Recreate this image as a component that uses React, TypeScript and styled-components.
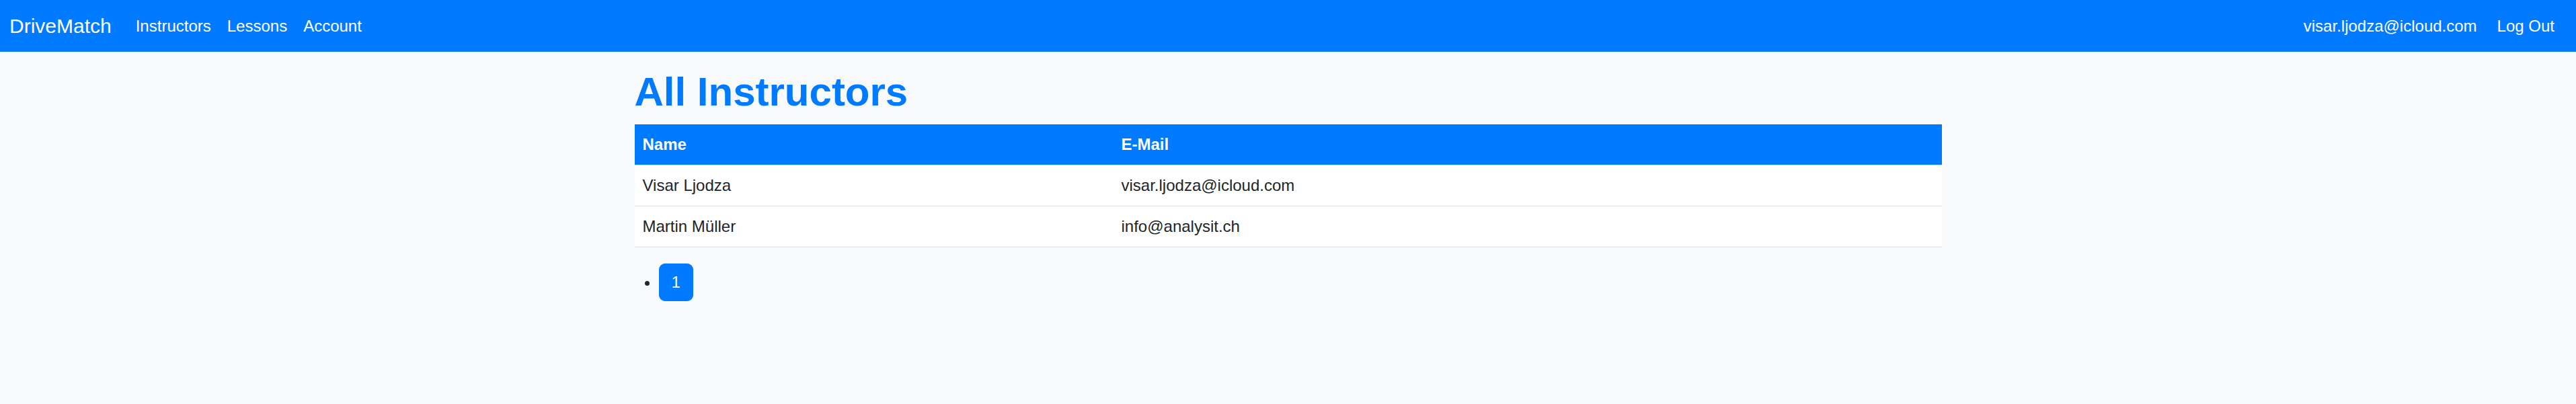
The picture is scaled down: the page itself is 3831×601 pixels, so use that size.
import React from "react";
import styled, { createGlobalStyle } from "styled-components";

const GlobalStyle = createGlobalStyle`
  html, body {
    margin: 0;
    padding: 0;
    background: #f8f9fa;
  }
  body {
    font-family: "Liberation Sans", Arial, sans-serif;
    font-size: 24px;
    line-height: 36px;
    color: #212529;
  }
  * { box-sizing: border-box; }
`;

const Page = styled.div`
  min-height: 601px;
  background: #f8f9fa;
`;

const Navbar = styled.nav`
  height: 77px;
  background: #007bff;
  display: flex;
  align-items: center;
  justify-content: space-between;
  padding: 0 20px 0 14px;
`;

const NavLeft = styled.div`
  display: flex;
  align-items: center;
`;

const Brand = styled.a`
  font-size: 30px;
  line-height: 45px;
  color: #fff;
  text-decoration: none;
  margin-right: 24px;
`;

const NavLink = styled.a<{ $gap?: number }>`
  color: #fff;
  text-decoration: none;
  font-size: 24px;
  line-height: 36px;
  padding: 0 12px;
  margin-left: ${(p) => p.$gap ?? 0}px;
`;

const NavText = styled.span`
  color: #fff;
  font-size: 24px;
  line-height: 36px;
`;

const NavRight = styled.div`
  display: flex;
  align-items: center;
`;

const Container = styled.main`
  max-width: 1980px;
  margin: 0 auto;
  padding: 24px 18px 0;
`;

const Title = styled.h1`
  margin: 0 0 12px;
  font-size: 60px;
  line-height: 72px;
  font-weight: 700;
  color: #007bff;
`;

const Table = styled.table`
  width: 100%;
  border-collapse: collapse;
  margin-bottom: 24px;
  background: #fff;
`;

const HeadCell = styled.th<{ $width?: number }>`
  background: #007bff;
  color: #fff;
  font-weight: 700;
  text-align: left;
  padding: 12px;
  line-height: 36px;
  border-bottom: 1px solid #dee2e6;
  width: ${(p) => (p.$width ? `${p.$width}px` : "auto")};
`;

const Cell = styled.td`
  padding: 12px;
  line-height: 36px;
  color: #212529;
  border-bottom: 1px solid #dee2e6;
`;

const PageList = styled.ul`
  margin: 0 0 24px;
  padding-left: 36px;
`;

const PageItem = styled.li`
  line-height: 36px;
`;

const PageButton = styled.a`
  display: inline-block;
  background: #007bff;
  color: #fff;
  border: 1px solid #007bff;
  border-radius: 9px;
  padding: 9px 18px;
  line-height: 36px;
  font-size: 24px;
  text-decoration: none;
`;

const instructors = [
  { name: "Visar Ljodza", email: "visar.ljodza@icloud.com" },
  { name: "Martin Müller", email: "info@analysit.ch" },
];

export default function App() {
  return (
    <Page>
      <GlobalStyle />
      <Navbar>
        <NavLeft>
          <Brand href="#">DriveMatch</Brand>
          <NavLink href="#">Instructors</NavLink>
          <NavLink href="#">Lessons</NavLink>
          <NavLink href="#">Account</NavLink>
        </NavLeft>
        <NavRight>
          <NavText>visar.ljodza@icloud.com</NavText>
          <NavLink href="#" $gap={18}>
            Log Out
          </NavLink>
        </NavRight>
      </Navbar>
      <Container>
        <Title>All Instructors</Title>
        <Table>
          <thead>
            <tr>
              <HeadCell $width={712}>Name</HeadCell>
              <HeadCell>E-Mail</HeadCell>
            </tr>
          </thead>
          <tbody>
            {instructors.map((i) => (
              <tr key={i.email}>
                <Cell>{i.name}</Cell>
                <Cell>{i.email}</Cell>
              </tr>
            ))}
          </tbody>
        </Table>
        <PageList>
          <PageItem>
            <PageButton href="#">1</PageButton>
          </PageItem>
        </PageList>
      </Container>
    </Page>
  );
}
